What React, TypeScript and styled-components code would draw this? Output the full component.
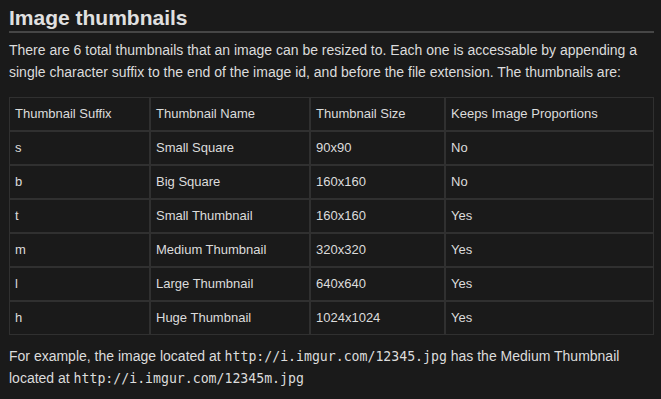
import React from 'react';
import styled, { createGlobalStyle } from 'styled-components';

const GlobalStyle = createGlobalStyle`
    body {
        margin: 0;
        background: #1a1a1a;
        color: #dcdcdc;
        font-family: "Liberation Sans", Arial, sans-serif;
    }
`;

const Page = styled.div`
    width: 645px;
    padding: 0 7px 0 9px;
`;

const Heading = styled.h2`
    margin: 0;
    padding-top: 5px;
    line-height: 26px;
    font-size: 21px;
    font-weight: bold;
    border-bottom: 2px solid #464646;
    color: #e0e0e0;
`;

const Text = styled.p<{ $top: number }>`
    margin: ${(p) => p.$top}px 0 0;
    font-size: 14px;
    line-height: 22px;
`;

const Code = styled.code`
    font-family: "DejaVu Sans Mono", "Liberation Mono", monospace;
    font-size: 13.2px;
    line-height: 1;
`;

const Table = styled.table`
    margin-top: 14px;
    width: 645px;
    border-collapse: separate;
    border-spacing: 0;
    table-layout: fixed;
    font-size: 13px;
`;

const Cell = styled.td`
    border: 1px solid #303030;
    padding: 8px 5px;
    line-height: 16px;
    text-align: left;
    font-weight: normal;
    vertical-align: middle;
    white-space: nowrap;
`;

const columns = [141, 160, 135, 209];

const rows = [
    ['s', 'Small Square', '90x90', 'No'],
    ['b', 'Big Square', '160x160', 'No'],
    ['t', 'Small Thumbnail', '160x160', 'Yes'],
    ['m', 'Medium Thumbnail', '320x320', 'Yes'],
    ['l', 'Large Thumbnail', '640x640', 'Yes'],
    ['h', 'Huge Thumbnail', '1024x1024', 'Yes'],
];

const App = () => {
    return (
        <Page>
            <GlobalStyle />
            <Heading>Image thumbnails</Heading>
            <Text $top={6}>
                There are 6 total thumbnails that an image can be resized to. Each one is accessable by appending a
                single character suffix to the end of the image id, and before the file extension. The thumbnails are:
            </Text>
            <Table>
                <colgroup>
                    {columns.map((w, i) => (
                        <col key={i} style={{ width: w }} />
                    ))}
                </colgroup>
                <thead>
                    <tr>
                        <Cell as="th">Thumbnail Suffix</Cell>
                        <Cell as="th">Thumbnail Name</Cell>
                        <Cell as="th">Thumbnail Size</Cell>
                        <Cell as="th">Keeps Image Proportions</Cell>
                    </tr>
                </thead>
                <tbody>
                    {rows.map((row) => (
                        <tr key={row[0]}>
                            {row.map((value, i) => (
                                <Cell key={i}>{value}</Cell>
                            ))}
                        </tr>
                    ))}
                </tbody>
            </Table>
            <Text $top={10}>
                For example, the image located at <Code>http://i.imgur.com/12345.jpg</Code> has the Medium Thumbnail
                located at <Code>http://i.imgur.com/12345m.jpg</Code>
            </Text>
        </Page>
    );
};

export default App;
